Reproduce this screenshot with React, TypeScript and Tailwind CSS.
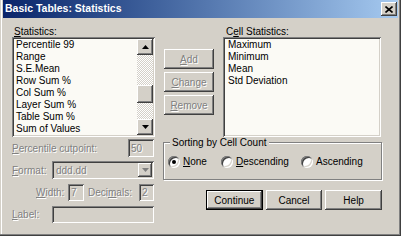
import React from 'react';

// classic win2000 bevels
const raised =
  'bg-[#d4d0c8] [box-shadow:inset_-1px_-1px_#404040,inset_1px_1px_#ffffff,inset_-2px_-2px_#808080,inset_2px_2px_#d4d0c8]';
const sunken =
  '[box-shadow:inset_1px_1px_#808080,inset_-1px_-1px_#ffffff,inset_2px_2px_#404040,inset_-2px_-2px_#d4d0c8]';
const dimText = 'text-[#808080] [text-shadow:1px_1px_0_#ffffff]';

function U({ children }: { children: React.ReactNode }) {
  return <span className="underline underline-offset-[1px]">{children}</span>;
}

function Arrow({ down = false, dim = false }: { down?: boolean; dim?: boolean }) {
  return (
    <svg width="7" height="4" viewBox="0 0 7 4" className={down ? '' : 'rotate-180'}>
      <path d="M0 0h7L3.5 4z" fill={dim ? '#808080' : '#000000'} />
    </svg>
  );
}

function Scrollbar() {
  return (
    <div className="flex w-[16px] flex-col">
      <div className={`flex h-[16px] items-center justify-center ${raised}`}>
        <Arrow />
      </div>
      <div className="flex-1 bg-[repeating-conic-gradient(#d4d0c8_0_25%,#ffffff_0_50%)] bg-[length:2px_2px] pt-[30px]">
        <div className={`h-[18px] ${raised}`} />
      </div>
      <div className={`flex h-[16px] items-center justify-center ${raised}`}>
        <Arrow down />
      </div>
    </div>
  );
}

function SideButton({ label, under }: { label: string; under: string }) {
  return (
    <div className={`flex h-[20px] w-[50px] items-center justify-center ${raised} ${dimText}`}>
      <U>{under}</U>
      {label}
    </div>
  );
}

function Radio({ checked = false, children }: { checked?: boolean; children: React.ReactNode }) {
  return (
    <div className="flex items-center gap-[3px]">
      <div className={`flex h-[12px] w-[12px] items-center justify-center rounded-full bg-white ${sunken}`}>
        {checked && <div className="h-[4px] w-[4px] rounded-full bg-black" />}
      </div>
      <span className="leading-[12px]">{children}</span>
    </div>
  );
}

function PushButton({ children, isDefault = false }: { children: React.ReactNode; isDefault?: boolean }) {
  if (isDefault) {
    return (
      <div className="h-[20px] w-[57px] border border-black">
        <div className={`flex h-full w-full items-center justify-center ${raised}`}>{children}</div>
      </div>
    );
  }
  return <div className={`flex h-[20px] w-[57px] items-center justify-center ${raised}`}>{children}</div>;
}

const statistics = [
  'Percentile 99',
  'Range',
  'S.E.Mean',
  'Row Sum %',
  'Col Sum %',
  'Layer Sum %',
  'Table Sum %',
  'Sum of Values',
];

const cellStats = ['Maximum', 'Minimum', 'Mean', 'Std Deviation'];

export default function App() {
  return (
    <div className="flex h-[236px] w-[401px] flex-col bg-[#d4d0c8] px-[3px] pb-[3px] font-['Liberation_Sans',Arial,sans-serif] text-[10px] text-black [box-shadow:inset_-1px_-1px_#404040,inset_-2px_-2px_#808080,inset_1px_0_#d4d0c8,inset_2px_0_#ffffff]">
      {/* title bar */}
      <div className="flex h-[18px] items-center bg-linear-to-r from-[#0a246a] to-[#a6caf0] pl-[2px] pr-[1px]">
        <span className="flex-1 text-[10.5px] font-bold text-white">Basic Tables: Statistics</span>
        <div className={`flex h-[14px] w-[16px] items-center justify-center ${raised}`}>
          <svg width="8" height="7" viewBox="0 0 8 7">
            <path d="M0.5 0.5l7 6M7.5 0.5l-7 6" stroke="#000000" strokeWidth="1.6" />
          </svg>
        </div>
      </div>

      <div className="flex flex-1 flex-col pl-[9px] pt-[8px]">
        {/* lists and side buttons */}
        <div className="flex">
          <div className="flex w-[143px] flex-col">
            <div className="h-[11px] pl-[2px] leading-[11px]">
              <U>S</U>tatistics:
            </div>
            <div className={`flex h-[100px] bg-[#fbfaf5] p-[2px] ${sunken}`}>
              <div className="flex-1 overflow-hidden pl-[2px]">
                {statistics.map((s) => (
                  <div key={s} className="h-[12px] leading-[12px] whitespace-nowrap">
                    {s}
                  </div>
                ))}
              </div>
              <Scrollbar />
            </div>
          </div>

          <div className="ml-[9px] flex w-[50px] flex-col gap-[3px] pt-[23px]">
            <SideButton under="A" label="dd" />
            <SideButton under="C" label="hange" />
            <SideButton under="R" label="emove" />
          </div>

          <div className="ml-[9px] flex w-[158px] flex-col">
            <div className="h-[11px] pl-[3px] leading-[11px]">
              C<U>e</U>ll Statistics:
            </div>
            <div className={`h-[100px] bg-[#fbfaf5] pl-[5px] pt-[2px] ${sunken}`}>
              {cellStats.map((s) => (
                <div key={s} className="h-[12px] leading-[12px]">
                  {s}
                </div>
              ))}
            </div>
          </div>
        </div>

        {/* lower part */}
        <div className="flex">
          <div className={`flex w-[143px] flex-col ${dimText}`}>
            <div className="mt-[2px] flex h-[18px] items-center">
              <span className="flex-1">
                <U>P</U>ercentile cutpoint:
              </span>
              <div className={`mr-[1px] flex h-[18px] w-[26px] items-center pl-[3px] ${sunken}`}>50</div>
            </div>
            <div className="mt-[4px] flex h-[18px] items-center">
              <span className="w-[40px]">
                <U>F</U>ormat:
              </span>
              <div className={`flex h-[18px] w-[102px] items-center p-[2px] ${sunken}`}>
                <span className="flex-1 pl-[2px]">ddd.dd</span>
                <div className={`flex h-[14px] w-[14px] items-center justify-center ${raised}`}>
                  <Arrow down dim />
                </div>
              </div>
            </div>
            <div className="mt-[5px] flex h-[17px] items-center pl-[24px]">
              <span className="w-[32px]">
                <U>W</U>idth:
              </span>
              <div className={`flex h-[17px] w-[16px] items-center pl-[3px] ${sunken}`}>7</div>
              <span className="ml-[4px] w-[51px]">
                Deci<U>m</U>als:
              </span>
              <div className={`flex h-[17px] w-[15px] items-center pl-[3px] ${sunken}`}>2</div>
            </div>
            <div className="mt-[5px] flex h-[17px] items-center">
              <span className="w-[40px]">
                <U>L</U>abel:
              </span>
              <div className={`h-[17px] w-[102px] ${sunken}`} />
            </div>
          </div>

          <div className="ml-[8px] flex w-[219px] flex-col">
            <fieldset className="border border-[#808080] [box-shadow:inset_1px_1px_#ffffff,1px_1px_#ffffff]">
              <legend className="ml-[6px] h-[11px] bg-[#d4d0c8] px-[2px] leading-[11px]">Sorting by Cell Count</legend>
              <div className="mt-[8px] mb-[11px] flex h-[12px] items-center pl-[4px]">
                <div className="w-[53px]">
                  <Radio checked>
                    <U>N</U>one
                  </Radio>
                </div>
                <div className="w-[80px]">
                  <Radio>
                    <U>D</U>escending
                  </Radio>
                </div>
                <Radio>Ascending</Radio>
              </div>
            </fieldset>
            <div className="mt-[10px] flex gap-[3px] pl-[43px]">
              <PushButton isDefault>Continue</PushButton>
              <PushButton>Cancel</PushButton>
              <PushButton>Help</PushButton>
            </div>
          </div>
        </div>
      </div>
    </div>
  );
}
